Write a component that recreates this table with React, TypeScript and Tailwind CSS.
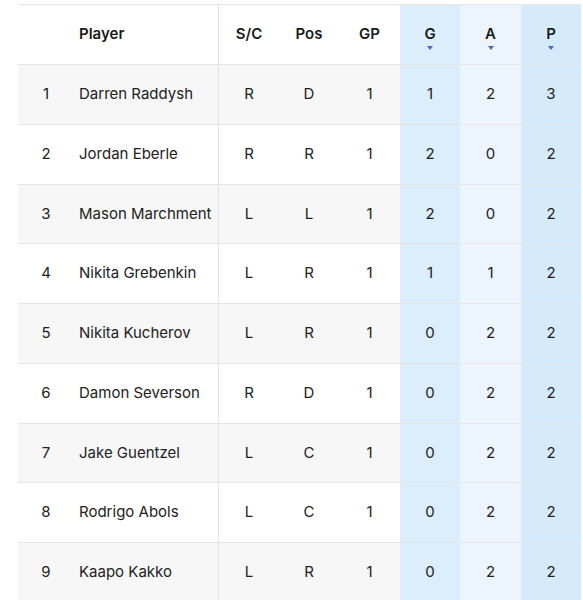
import React from 'react';

const players = [
  { n: 1, name: 'Darren Raddysh', sc: 'R', pos: 'D', gp: 1, g: 1, a: 2, p: 3 },
  { n: 2, name: 'Jordan Eberle', sc: 'R', pos: 'R', gp: 1, g: 2, a: 0, p: 2 },
  { n: 3, name: 'Mason Marchment', sc: 'L', pos: 'L', gp: 1, g: 2, a: 0, p: 2 },
  { n: 4, name: 'Nikita Grebenkin', sc: 'L', pos: 'R', gp: 1, g: 1, a: 1, p: 2 },
  { n: 5, name: 'Nikita Kucherov', sc: 'L', pos: 'R', gp: 1, g: 0, a: 2, p: 2 },
  { n: 6, name: 'Damon Severson', sc: 'R', pos: 'D', gp: 1, g: 0, a: 2, p: 2 },
  { n: 7, name: 'Jake Guentzel', sc: 'L', pos: 'C', gp: 1, g: 0, a: 2, p: 2 },
  { n: 8, name: 'Rodrigo Abols', sc: 'L', pos: 'C', gp: 1, g: 0, a: 2, p: 2 },
  { n: 9, name: 'Kaapo Kakko', sc: 'L', pos: 'R', gp: 1, g: 0, a: 2, p: 2 },
];

const grid = 'grid grid-cols-[56px_144px_61px_60px_61px_60px_61px_60px]';

function SortArrow() {
  return (
    <svg className="absolute left-1/2 top-[41px] -translate-x-1/2" width="6" height="4" viewBox="0 0 6 4">
      <path d="M0 0h6L3 4z" fill="#4a67d6" />
    </svg>
  );
}

function HeadCell({ label, className = '', sorted = false }: { label: string; className?: string; sorted?: boolean }) {
  return (
    <div className={`relative flex items-center justify-center ${className}`}>
      {label}
      {sorted && <SortArrow />}
    </div>
  );
}

export default function App() {
  return (
    <div className="min-h-screen bg-white pt-1 pl-[18px] font-['Inter',sans-serif] text-[15px] text-[#222]">
      <div className="w-[563px] border-t border-[#e6e6e6]">
        {/* Header */}
        <div className={`${grid} h-[60px] border-b border-[#e6e6e6] font-semibold text-[#1a1a1a]`}>
          <div />
          <div className="flex items-center pl-[5px]">Player</div>
          <HeadCell label="S/C" className="border-l border-[#e3e3e3]" />
          <HeadCell label="Pos" />
          <HeadCell label="GP" />
          <HeadCell label="G" sorted className="bg-[#dcedfb]" />
          <HeadCell label="A" sorted className="bg-[#ecf5fd]" />
          <HeadCell label="P" sorted className="bg-[#d5eafa]" />
        </div>

        {players.map((r) => (
          <div
            key={r.n}
            className={`${grid} h-[59.75px] border-b border-[#e6e6e6] ${r.n % 2 === 1 ? 'bg-[#f7f7f7]' : 'bg-white'}`}
          >
            <div className="flex items-center justify-center">{r.n}</div>
            <div className="flex items-center whitespace-nowrap pl-[5px]">{r.name}</div>
            <div className="flex items-center justify-center border-l border-[#e3e3e3]">{r.sc}</div>
            <div className="flex items-center justify-center">{r.pos}</div>
            <div className="flex items-center justify-center">{r.gp}</div>
            <div className="flex items-center justify-center bg-[#dcedfb]">{r.g}</div>
            <div className="flex items-center justify-center bg-[#ecf5fd]">{r.a}</div>
            <div className="flex items-center justify-center bg-[#d5eafa]">{r.p}</div>
          </div>
        ))}
      </div>
    </div>
  );
}
